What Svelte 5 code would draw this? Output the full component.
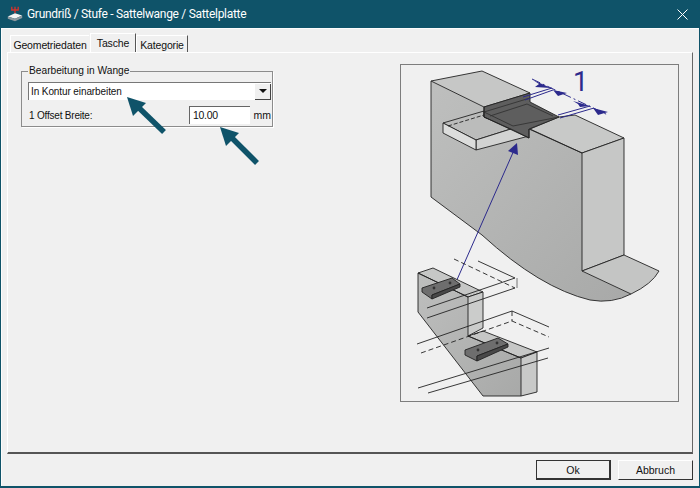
<script>
	const tabs = [
		{ label: 'Geometriedaten', active: false },
		{ label: 'Tasche', active: true },
		{ label: 'Kategorie', active: false }
	];
</script>

<div class="window">
	<header class="titlebar">
		<svg class="appicon" viewBox="0 0 20 20" width="16" height="16">
			<path d="M10 1v8M6 1v4h8V1" fill="none" stroke="#d8322a" stroke-width="1.6" />
			<path d="M1 13l9-4 9 3-9 4z" fill="#f4f4f4" />
			<path d="M1 13l9 3v3l-9-3zM10 16l9-4v3l-9 4z" fill="#8f9aa0" />
		</svg>
		<span class="title">Grundriß / Stufe - Sattelwange / Sattelplatte</span>
		<svg class="close" viewBox="0 0 11 11" width="11" height="11">
			<path d="M.5 .5l10 10M10.5 .5l-10 10" stroke="#fff" stroke-width="1" fill="none" />
		</svg>
	</header>

	<main class="content">
		<nav class="tabs">
			{#each tabs as tab}
				<button class="tab" class:active={tab.active}>{tab.label}</button>
			{/each}
		</nav>

		<section class="panel">
			<fieldset class="group">
				<legend>Bearbeitung in Wange</legend>
				<div class="combo">
					<span>In Kontur einarbeiten</span>
					<span class="drop"><i></i></span>
				</div>
				<div class="row">
					<label for="offset">1 Offset Breite:</label>
					<input id="offset" type="text" value="10.00" />
					<span class="unit">mm</span>
				</div>
			</fieldset>

			<figure class="picture">
				<svg viewBox="401 65 277 336" width="277" height="336">
					<defs>
						<linearGradient id="side" x1="0" y1="0" x2="1" y2="1">
							<stop offset="0" stop-color="#bebfbe" />
							<stop offset="1" stop-color="#a8a9a8" />
						</linearGradient>
					</defs>

					<!-- large stringer -->
					<g stroke="#222" stroke-width="0.9" stroke-linejoin="round">
						<path d="M431 81L484 107L529 129L582 153V271L631 294Q610 304 590 300Q540 288 482 235L431 197Z" fill="url(#side)" stroke="none" />
						<path d="M431 81V197L482 235Q540 288 590 300Q612 304 631 294" fill="none" />
						<path d="M431 81L482 71L530 93L484 107Z" fill="#c6c7c6" />
						<path d="M530 129L559 117L575 115L624 138L582 153Z" fill="#c8c9c8" />
						<path d="M582 153L624 138V255L582 271Z" fill="#c6c7c6" />
						<path d="M582 271L624 255L659 271Q652 284 631 294Z" fill="#c4c5c4" />

						<path d="M443 123L484 111V117L514 128L476 140Z" fill="#bbbcbb" />
						<path d="M476 140L514 128L525 133L529 136L476 150Z" fill="#d2d3d2" />
						<path d="M443 123L476 140V150L443 133Z" fill="#dcdddc" />
						<path d="M448 126L484 115" fill="none" stroke-dasharray="4 2" />

						<path d="M484 107L530 93V102L559 117L529 129V138L513 130L484 117Z" fill="#5e5e5e" />
						<path d="M484 112L530 98M484 112L513 126L559 117M490 116L527 104L553 116" fill="none" stroke="#333" />
						<path d="M529 129L582 153" fill="none" />
						<path d="M484 107V117L529 138V129" fill="none" />
					</g>

					<!-- dimension -->
					<g stroke="#2c2a8c" fill="#2c2a8c" stroke-width="1">
						<path d="M532 79L608 115" fill="none" stroke-dasharray="9 3 2 3" />
						<path d="M523 97L552 88M525 100L553 90M558 115L590 106M560 118L594 108" fill="none" />
						<path d="M551 88L533 80L539 84L535 87Z" stroke="none" />
						<path d="M553 90L567 93L558 96Z" stroke="none" />
						<path d="M590 106L573 101L578 104L580 107Z" stroke="none" />
						<path d="M593 108L608 112L598 115Z" stroke="none" />
						<path d="M456 282L515 148" fill="none" />
						<path d="M517 143L508 151L518 155Z" stroke="none" />
					</g>
					<text x="573" y="91" class="dim">1</text>

					<!-- small overview -->
					<g stroke="#222" stroke-width="0.9" stroke-linejoin="round">
						<path d="M418 273V312L483 396H521V358L505 348L468 336V297Z" fill="url(#side)" stroke="none" />
						<path d="M418 273V312L483 396H521" fill="none" />
						<path d="M418 273L433 268L483 292L468 297Z" fill="#c6c7c6" />
						<path d="M468 297L483 292V328L468 336Z" fill="#cbcccb" />
						<path d="M468 336L483 331L537 352L521 358Z" fill="#c6c7c6" />
						<path d="M521 358L537 352V392L521 396Z" fill="#c8c9c8" />
						<path d="M418 273L468 297M468 336L521 358" fill="none" />

						<path d="M422 288L452 278L460 284L432 295V299L422 292Z" fill="#6e6e6e" />
						<path d="M432 295L460 284V287L432 299Z" fill="#484848" />
						<path d="M465 350L498 338L508 344L477 356V361L465 355Z" fill="#6e6e6e" />
						<path d="M477 356L508 344V347L477 361Z" fill="#484848" />
						<circle cx="434" cy="288" r="1.4" fill="#333" stroke="none" />
						<circle cx="450" cy="283" r="1.4" fill="#333" stroke="none" />
						<circle cx="478" cy="350" r="1.4" fill="#333" stroke="none" />
						<circle cx="497" cy="343" r="1.4" fill="#333" stroke="none" />

						<g fill="none">
							<path d="M427 308L515 278L478 261M427 318L515 288" />
							<path d="M517 278V288" stroke="#666" />
							<path d="M454 259L515 288" stroke-dasharray="5 3" />
							<path d="M417 344L512 311L549 327" />
							<path d="M421 353L512 321L549 337M512 311V321" stroke-dasharray="5 3" />
							<path d="M418 388L549 348M428 393L548 358" />
						</g>
					</g>
				</svg>
			</figure>
		</section>

		<footer class="buttons">
			<button class="btn default">Ok</button>
			<button class="btn">Abbruch</button>
		</footer>
	</main>

	<!-- callout arrows from the documentation -->
	<svg class="callouts" viewBox="0 0 700 488" width="700" height="488">
		<path d="M164 132L136 105" stroke="#0f5369" stroke-width="5.5" fill="none" />
		<path d="M127 97L146 103L133 116Z" fill="#0f5369" />
		<path d="M257 163L229 135" stroke="#0f5369" stroke-width="5.5" fill="none" />
		<path d="M220 127L239 133L226 146Z" fill="#0f5369" />
	</svg>
</div>

<style>
	:global(body) {
		margin: 0;
	}

	.window {
		position: relative;
		width: 700px;
		height: 488px;
		box-sizing: border-box;
		display: flex;
		flex-direction: column;
		background: #0f5369;
		padding: 0 1px 2px;
		font-family: 'Liberation Sans', Arial, sans-serif;
		font-size: 10.5px;
		color: #111;
		overflow: hidden;
	}

	.titlebar {
		height: 28px;
		flex: none;
		display: flex;
		align-items: center;
		padding: 0 6px;
		gap: 4px;
		color: #fff;
	}

	.title {
		flex: 1;
		font-family: Roboto, sans-serif;
		font-size: 12px;
		letter-spacing: -0.3px;
	}

	.close {
		margin-right: 5px;
	}

	.content {
		flex: 1;
		min-height: 0;
		display: flex;
		flex-direction: column;
		background: #f0f0f0;
		border-top: 1px solid #fcfcfc;
		border-left: 1px solid #fcfcfc;
		padding: 6px 6px 6px 5px;
	}

	.tabs {
		display: flex;
		height: 17px;
		padding-left: 3px;
		flex: none;
	}

	.tab {
		font: inherit;
		letter-spacing: -0.15px;
		padding: 2px 0 0;
		margin: 0;
		width: 79px;
		background: #f0f0f0;
		color: #111;
		border: 0;
		border-top: 1px solid #fff;
		border-left: 1px solid #fff;
	}

	.tab.active {
		width: 46px;
		height: 19px;
		margin: -2px 0 0 1px;
		padding: 0;
		position: relative;
		z-index: 1;
		border-right: 1px solid #555;
	}

	.tab:last-child {
		width: 52px;
		border-right: 1px solid #555;
	}

	.panel {
		flex: 1;
		min-height: 0;
		display: flex;
		justify-content: space-between;
		align-items: flex-start;
		border-top: 1px solid #fff;
		border-left: 1px solid #fff;
		border-right: 1px solid #666;
		border-bottom: 2px solid #555;
		padding: 11px 13px 0 13px;
		margin-bottom: 6px;
	}

	.group {
		width: 252px;
		height: 62px;
		box-sizing: border-box;
		margin: 1px 0 0;
		padding: 0 1px 0 6px;
		border: 1px solid #8c8c8c;
		box-shadow: 1px 1px 0 #fff;
		font-size: 10px;
	}

	legend {
		padding: 0 1px;
		margin-left: 0;
		line-height: 12px;
		font-size: 10.2px;
	}

	.combo {
		display: flex;
		justify-content: space-between;
		align-items: center;
		height: 18px;
		box-sizing: border-box;
		margin-top: 5px;
		padding-left: 2px;
		background: #fff;
		border-top: 1px solid #777;
		border-left: 1px solid #777;
		letter-spacing: -0.1px;
	}

	.drop {
		width: 15px;
		height: 15px;
		display: flex;
		align-items: center;
		justify-content: center;
		background: #f0f0f0;
		border-right: 1px solid #444;
		border-bottom: 1px solid #444;
	}

	.drop i {
		width: 0;
		height: 0;
		border: 4px solid transparent;
		border-top: 4px solid #111;
		border-bottom: 0;
	}

	.row {
		display: flex;
		align-items: center;
		margin-top: 6px;
		height: 18px;
	}

	.row label {
		flex: 1;
		padding-left: 1px;
		letter-spacing: -0.2px;
	}

	.row input {
		width: 61px;
		height: 18px;
		box-sizing: border-box;
		padding: 0 0 2px 3px;
		font: inherit;
		font-size: 10.5px;
		letter-spacing: -0.3px;
		color: #111;
		border: 0;
		border-top: 1px solid #666;
		border-left: 1px solid #666;
		outline: 0;
	}

	.unit {
		width: 21px;
		text-align: right;
		font-size: 10.5px;
	}

	.picture {
		margin: 0;
		width: 277px;
		height: 336px;
		border: 1px solid #7d7d7d;
		background: #f0f0f0;
	}

	.picture svg {
		display: block;
	}

	.dim {
		font-family: Roboto, sans-serif;
		font-size: 27px;
		fill: #2c2a8c;
	}

	.buttons {
		flex: none;
		display: flex;
		justify-content: flex-end;
		gap: 7px;
	}

	.btn {
		width: 75px;
		height: 20px;
		box-sizing: border-box;
		padding: 0;
		font: inherit;
		font-size: 10.5px;
		color: #111;
		background: #f0f0f0;
		border: 0;
		border-top: 1px solid #fff;
		border-left: 1px solid #fff;
		border-right: 1px solid #333;
		border-bottom: 1px solid #333;
	}

	.btn.default {
		border: 1px solid #333;
		border-right-width: 2px;
		border-bottom-width: 2px;
	}

	.callouts {
		position: absolute;
		inset: 0;
		pointer-events: none;
	}
</style>
